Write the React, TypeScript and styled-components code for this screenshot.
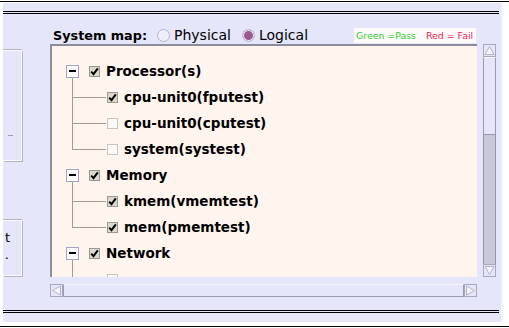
import styled, { createGlobalStyle } from "styled-components";

const GlobalStyle = createGlobalStyle`
  html, body { margin: 0; padding: 0; background: #fff; }
  body { font-family: "DejaVu Sans", "Noto Sans", sans-serif; }
`;

const Screen = styled.div`
  width: 509px;
  height: 328px;
  overflow: hidden;
  background: #fff;
  display: flex;
  flex-direction: column;
`;

const Rule = styled.div<{ $top: number }>`
  flex-shrink: 0;
  height: 1px;
  background: #000;
  margin-top: ${(p) => p.$top}px;
`;

const Window = styled.div`
  flex-shrink: 0;
  height: 319px;
  margin: 1px 6px 0 3px;
  background: #e6e6fa;
  border-right: 2px solid #f3f3ff;
  display: flex;
  flex-direction: column;
`;

const DoubleRule = styled.div<{ $top: number }>`
  flex-shrink: 0;
  height: 1px;
  margin: ${(p) => p.$top}px 2px 0 0;
  border-top: 1px solid #000;
  border-bottom: 1px solid #000;
`;

const Body = styled.div`
  height: 296px;
  display: grid;
  grid-template-columns: 47px 1fr;
`;

const Side = styled.div`
  display: flex;
  flex-direction: column;
`;

const SideBox = styled.div<{ $top: number; $h: number }>`
  width: 19px;
  height: ${(p) => p.$h}px;
  margin-top: ${(p) => p.$top}px;
  box-sizing: border-box;
  border: 1px solid #fbfbff;
  border-left: none;
  box-shadow: 1px 1px 0 #b4b4c8, 0 -1px 0 #b4b4c8;
  overflow: hidden;
  display: flex;
  flex-direction: column;
`;

const SideMark = styled.div`
  width: 5px;
  height: 1px;
  background: #9c9cac;
  margin: 84px 0 0 5px;
`;

const SideText = styled.div<{ $pad: number }>`
  display: flex;
  justify-content: flex-end;
  font-size: 13px;
  line-height: 17px;
  color: #000;
  white-space: nowrap;
  padding-right: ${(p) => p.$pad}px;
  &:first-child { margin-top: 8px; }
`;

const Main = styled.div`
  display: flex;
  flex-direction: column;
`;

const Header = styled.div`
  height: 30px;
  display: flex;
  align-items: flex-end;
  padding: 0 0 1px 3px;
  box-sizing: border-box;
`;

const Title = styled.span`
  font-size: 12.8px;
  font-weight: bold;
  line-height: 15px;
  color: #000;
  margin-right: 10px;
`;

const RadioLabel = styled.label<{ $gap: number }>`
  display: flex;
  align-items: center;
  gap: 4px;
  font-size: 14px;
  line-height: 15px;
  color: #000;
  margin-right: ${(p) => p.$gap}px;
`;

const RadioDot = styled.span<{ $on?: boolean }>`
  width: 11px;
  height: 11px;
  border-radius: 50%;
  border: 1px solid ${(p) => (p.$on ? "#c4c4d8" : "#b4b4c4")};
  background: ${(p) => (p.$on ? "#9a5a8e" : "#eeeefc")};
  box-shadow: ${(p) => (p.$on ? "inset 0 0 0 1px #ececfa" : "none")};
`;

const Legend = styled.div`
  margin-left: auto;
  margin-right: 25px;
  width: 122px;
  height: 15px;
  box-sizing: border-box;
  padding-left: 2px;
  background: #fffafa;
  display: flex;
  align-items: center;
  gap: 10px;
  font-size: 9.4px;
`;

const LegendItem = styled.span<{ $color: string }>`
  color: ${(p) => p.$color};
  white-space: nowrap;
`;

const TreeArea = styled.div`
  display: flex;
  gap: 6px;
  height: 233px;
`;

const TreePanel = styled.div`
  flex: 0 0 427px;
  box-sizing: border-box;
  border-top: 2px solid #8c8c9c;
  border-left: 2px solid #8c8c9c;
  background: #fff5ee;
  overflow: hidden;
  padding: 12px 0 0 14px;
`;

const Row = styled.div<{ $child?: boolean }>`
  height: 26px;
  display: flex;
  align-items: center;
  padding-left: ${(p) => (p.$child ? 6 : 0)}px;
`;

const Expander = styled.span`
  width: 13px;
  height: 13px;
  box-sizing: border-box;
  border: 1px solid #a4a4c4;
  background: #fbfbff;
  margin-right: 10px;
  display: flex;
  align-items: center;
  justify-content: center;
  &::after {
    content: "";
    width: 7px;
    height: 2px;
    margin-top: -1px;
    background: #000;
  }
`;

const Connector = styled.span<{ $last?: boolean }>`
  position: relative;
  width: 35px;
  height: 26px;
  flex-shrink: 0;
  &::before {
    content: "";
    position: absolute;
    left: 0;
    top: -6px;
    width: 1px;
    height: ${(p) => (p.$last ? 19 : 32)}px;
    background: #a39c96;
  }
  &::after {
    content: "";
    position: absolute;
    left: 0;
    top: 13px;
    width: 34px;
    height: 1px;
    background: #a39c96;
  }
`;

const Check = styled.span<{ $on?: boolean }>`
  width: 11px;
  height: 11px;
  box-sizing: border-box;
  border: 1px solid ${(p) => (p.$on ? "#9c9890" : "#c8c4c0")};
  background: ${(p) => (p.$on ? "#dcd8d0" : "#fcfaf8")};
  margin-right: 6px;
  display: flex;
  flex-shrink: 0;
`;

const Label = styled.span`
  font-size: 13.5px;
  font-weight: bold;
  color: #000;
  white-space: nowrap;
`;

const VScroll = styled.div`
  width: 13px;
  display: flex;
  flex-direction: column;
`;

const HScroll = styled.div`
  width: 427px;
  height: 13px;
  margin-top: 7px;
  display: flex;
`;

const ArrowButton = styled.span`
  width: 13px;
  height: 13px;
  flex-shrink: 0;
  box-sizing: border-box;
  border: 1px solid #a8a8bc;
  background: #e6e6fa;
  display: flex;
`;

const Thumb = styled.span<{ $size?: number }>`
  box-sizing: border-box;
  background: #e6e6fa;
  border: 1px solid #9a9aac;
  border-top-color: #f6f6ff;
  ${(p) => (p.$size ? `height: ${p.$size}px; flex-shrink: 0;` : "flex: 1;")}
`;

const Track = styled.span`
  flex: 1;
  background: #c8c8d6;
  border-left: 1px solid #9494a4;
  border-right: 1px solid #9494a4;
`;

type Dir = "up" | "down" | "left" | "right";

const arrowPoints: Record<Dir, string> = {
  up: "5.5,1.5 10,9.5 1,9.5",
  down: "1,1.5 10,1.5 5.5,9.5",
  left: "1.5,5.5 9.5,1 9.5,10",
  right: "1.5,1 1.5,10 9.5,5.5",
};

function Arrow({ dir }: { dir: Dir }) {
  return (
    <ArrowButton>
      <svg width="11" height="11" viewBox="0 0 11 11">
        <polygon points={arrowPoints[dir]} fill="#f4f4fc" stroke="#b4b4c4" strokeWidth="1" />
      </svg>
    </ArrowButton>
  );
}

function CheckBox({ on }: { on?: boolean }) {
  return (
    <Check $on={on}>
      {on && (
        <svg width="9" height="9" viewBox="0 0 9 9">
          <path d="M1.2 4.6 L3.5 7.2 L7.8 1.4" fill="none" stroke="#000" strokeWidth="2" />
        </svg>
      )}
    </Check>
  );
}

interface ITest {
  name: string;
  on: boolean;
}

interface IGroup {
  name: string;
  on: boolean;
  tests: ITest[];
}

// the network test row sits below the visible part of the panel
const groups: IGroup[] = [
  {
    name: "Processor(s)",
    on: true,
    tests: [
      { name: "cpu-unit0(fputest)", on: true },
      { name: "cpu-unit0(cputest)", on: false },
      { name: "system(systest)", on: false },
    ],
  },
  {
    name: "Memory",
    on: true,
    tests: [
      { name: "kmem(vmemtest)", on: true },
      { name: "mem(pmemtest)", on: true },
    ],
  },
  {
    name: "Network",
    on: true,
    tests: [{ name: "", on: false }],
  },
];

function App() {
  return (
    <Screen>
      <GlobalStyle />
      <Rule $top={1} />
      <Window>
        <DoubleRule $top={8} />
        <Body>
          <Side>
            <SideBox $top={36} $h={111}>
              <SideMark />
            </SideBox>
            <SideBox $top={59} $h={56}>
              <SideText $pad={11}>t</SideText>
              <SideText $pad={12}>.</SideText>
            </SideBox>
          </Side>
          <Main>
            <Header>
              <Title>System map:</Title>
              <RadioLabel $gap={11}>
                <RadioDot />
                Physical
              </RadioLabel>
              <RadioLabel $gap={0}>
                <RadioDot $on />
                Logical
              </RadioLabel>
              <Legend>
                <LegendItem $color="#33cc33">Green =Pass</LegendItem>
                <LegendItem $color="#ee1a50">Red = Fail</LegendItem>
              </Legend>
            </Header>
            <TreeArea>
              <TreePanel>
                {groups.map((g) => (
                  <div key={g.name}>
                    <Row>
                      <Expander />
                      <CheckBox on={g.on} />
                      <Label>{g.name}</Label>
                    </Row>
                    {g.tests.map((t, i) => (
                      <Row $child key={t.name || i}>
                        <Connector $last={i === g.tests.length - 1} />
                        <CheckBox on={t.on} />
                        {t.name && <Label>{t.name}</Label>}
                      </Row>
                    ))}
                  </div>
                ))}
              </TreePanel>
              <VScroll>
                <Arrow dir="up" />
                <Thumb $size={78} />
                <Track />
                <Arrow dir="down" />
              </VScroll>
            </TreeArea>
            <HScroll>
              <Arrow dir="left" />
              <Thumb />
              <Arrow dir="right" />
            </HScroll>
          </Main>
        </Body>
        <DoubleRule $top={0} />
      </Window>
      <Rule $top={4} />
    </Screen>
  );
}

export default App;
